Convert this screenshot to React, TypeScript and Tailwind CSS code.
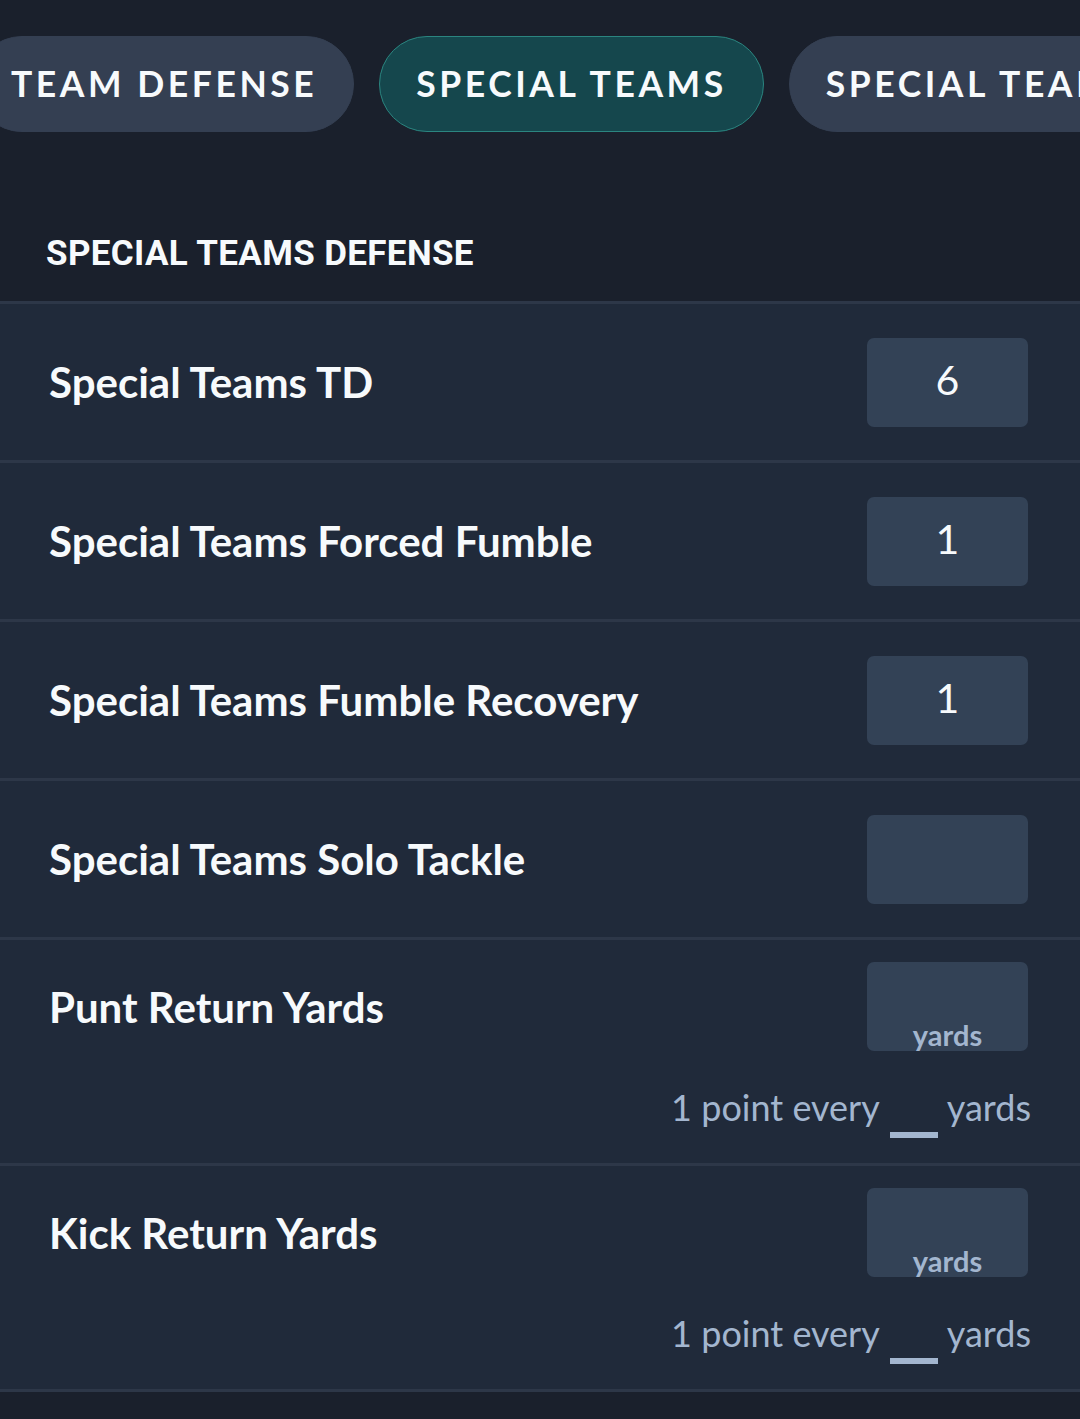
const tabs = [
  { label: 'TEAM DEFENSE', active: false },
  { label: 'SPECIAL TEAMS', active: true },
  { label: 'SPECIAL TEAMS OFFENSE', active: false },
];

const rows = [
  { label: 'Special Teams TD', value: '6' },
  { label: 'Special Teams Forced Fumble', value: '1' },
  { label: 'Special Teams Fumble Recovery', value: '1' },
  { label: 'Special Teams Solo Tackle', value: '' },
];

const yardRows = ['Punt Return Yards', 'Kick Return Yards'];

export default function App() {
  return (
    <div className="min-h-[1419px] w-[1080px] overflow-hidden bg-[#1a202c] font-['Lato',sans-serif] text-[#f7fafc]">
      {/* tab strip, scrolled a little to the right */}
      <div className="overflow-hidden pt-[36px]">
        <div className="ml-[-26px] flex gap-[25px] whitespace-nowrap">
          {tabs.map((tab) => (
            <div
              key={tab.label}
              className={`flex h-[96px] shrink-0 items-center rounded-full border px-[36px] text-[35.5px] font-bold tracking-[0.1em] ${
                tab.active ? 'border-[#2b8580] bg-[#15474d]' : 'border-[#343f52] bg-[#343f52]'
              }`}
            >
              {tab.label}
            </div>
          ))}
        </div>
      </div>

      <div className="mt-[104px] pb-[30px] pl-[46px] font-['Roboto',sans-serif] text-[35px] font-bold leading-none tracking-[0.01em]">
        SPECIAL TEAMS DEFENSE
      </div>

      <div className="border-t-[3px] border-[#2d3748]">
        {rows.map((row) => (
          <div
            key={row.label}
            className="flex h-[159px] items-center justify-between border-b-[3px] border-[#2d3748] bg-[#202a3a] pl-[49px] pr-[52px]"
          >
            <span className="text-[42px] font-bold">{row.label}</span>
            <div className="flex h-[89px] w-[161px] items-center justify-center rounded-[7px] bg-[#334256] pb-[5px] text-[41px]">
              {row.value}
            </div>
          </div>
        ))}

        {yardRows.map((label) => (
          <div key={label} className="border-b-[3px] border-[#2d3748] bg-[#202a3a] pl-[49px] pr-[49px] pt-[22px] pb-[38px]">
            <div className="flex items-start justify-between pr-[3px]">
              <span className="pt-[14px] text-[42px] font-bold">{label}</span>
              <div className="flex h-[89px] w-[161px] items-end justify-center rounded-[7px] bg-[#334256] text-[29px] font-bold leading-none text-[#a3b6cf]">
                <span className="translate-y-[-2px]">yards</span>
              </div>
            </div>
            <div className="mt-[38px] flex items-baseline justify-end text-[36px] leading-none text-[#a3b6cf]">
              <span>1 point every</span>
              <span className="ml-[10px] mr-[9px] inline-block h-[6px] w-[48px] translate-y-[17px] bg-[#a3b6cf]" />
              <span>yards</span>
            </div>
          </div>
        ))}
      </div>
    </div>
  );
}
